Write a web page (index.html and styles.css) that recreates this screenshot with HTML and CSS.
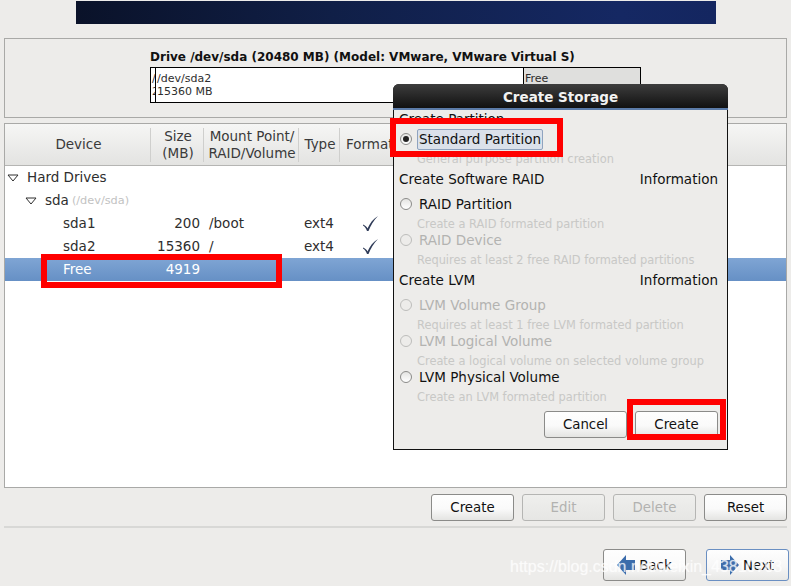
FILE: index.html
```html
<!DOCTYPE html>
<html lang="en">
	<head>
		<meta charset="utf-8" />
		<meta name="viewport" content="width=device-width, initial-scale=1" />
		<title>Create Storage</title>
		<link rel="stylesheet" href="styles.css">
	</head>
	<body>
		<div class="banner"></div>

		<section class="drive">
			<h2>Drive /dev/sda (20480 MB) (Model: VMware, VMware Virtual S)</h2>
			<div class="bar">
				<div class="seg seg-boot">/<br>200 MB</div>
				<div class="seg seg-root">/dev/sda2<br>15360 MB</div>
				<div class="seg seg-free">Free<br>4919 MB</div>
			</div>
		</section>

		<section class="tree">
			<div class="row head">
				<div class="cell">Device</div>
				<div class="cell">Size<br>(MB)</div>
				<div class="cell">Mount Point/<br>RAID/Volume</div>
				<div class="cell">Type</div>
				<div class="cell cell-format">Format</div>
			</div>
			<div class="row">
				<div class="name lvl0">
					<svg class="arrow" width="12" height="8" viewBox="0 0 12 8"><path d="M1 1H11L6 7Z" /></svg>
					Hard Drives
				</div>
			</div>
			<div class="row">
				<div class="name lvl1">
					<svg class="arrow" width="12" height="8" viewBox="0 0 12 8"><path d="M1 1H11L6 7Z" /></svg>
					sda <span class="path">(/dev/sda)</span>
				</div>
			</div>
			<div class="row">
				<div class="name lvl2">sda1</div>
				<div class="size">200</div>
				<div class="mount">/boot</div>
				<div class="type">ext4</div>
				<div class="fmt"><svg width="17" height="17" viewBox="0 0 17 17"><path d="M1 9.5C3 10 5 12 5.5 13.5C8 8 11 4 16 1C12 5 8.5 10.5 6.5 16H5C4 13.5 3 11.5 1 10.5Z" /></svg></div>
			</div>
			<div class="row">
				<div class="name lvl2">sda2</div>
				<div class="size">15360</div>
				<div class="mount">/</div>
				<div class="type">ext4</div>
				<div class="fmt"><svg width="17" height="17" viewBox="0 0 17 17"><path d="M1 9.5C3 10 5 12 5.5 13.5C8 8 11 4 16 1C12 5 8.5 10.5 6.5 16H5C4 13.5 3 11.5 1 10.5Z" /></svg></div>
			</div>
			<div class="row selected">
				<div class="name lvl2">Free</div>
				<div class="size">4919</div>
			</div>
		</section>

		<div class="actions">
			<button class="btn">Create</button>
			<button class="btn" disabled>Edit</button>
			<button class="btn" disabled>Delete</button>
			<button class="btn">Reset</button>
		</div>

		<div class="sep"></div>

		<div class="nav">
			<button class="btn btn-nav">
				<svg width="18" height="20" viewBox="0 0 18 20"><path class="nav-arrow" d="M0 10L9 0V5H18V15H9V20Z" /></svg>
				Back
			</button>
			<button class="btn btn-nav focus">
				<svg width="18" height="20" viewBox="0 0 18 20"><path class="nav-arrow" d="M18 10L9 0V5H0V15H9V20Z" /></svg>
				Next
			</button>
		</div>

		<div class="dialog">
			<div class="dialog-title">Create Storage</div>
			<div class="dialog-body">
				<div class="group">Create Partition</div>
				<div class="opt first"><span class="radio on"></span><span class="label active">Standard Partition</span></div>
				<div class="desc">General purpose partition creation</div>

				<div class="group gap"><span>Create Software RAID</span><span>Information</span></div>
				<div class="opt first-after"><span class="radio"></span><span class="label">RAID Partition</span></div>
				<div class="desc">Create a RAID formated partition</div>
				<div class="opt off"><span class="radio"></span><span class="label">RAID Device</span></div>
				<div class="desc">Requires at least 2 free RAID formated partitions</div>

				<div class="group gap"><span>Create LVM</span><span>Information</span></div>
				<div class="opt first-after off"><span class="radio"></span><span class="label">LVM Volume Group</span></div>
				<div class="desc">Requires at least 1 free LVM formated partition</div>
				<div class="opt off"><span class="radio"></span><span class="label">LVM Logical Volume</span></div>
				<div class="desc">Create a logical volume on selected volume group</div>
				<div class="opt"><span class="radio"></span><span class="label">LVM Physical Volume</span></div>
				<div class="desc">Create an LVM formated partition</div>

				<div class="dialog-actions">
					<button class="btn">Cancel</button>
					<button class="btn">Create</button>
				</div>
			</div>
		</div>

		<div class="mark mark-free"></div>
		<div class="mark mark-standard"></div>
		<div class="mark mark-create"></div>

		<div class="watermark">https://blog.csdn.net/weixin_43810703</div>
	</body>
</html>
```

FILE: styles.css
```css
* {
	box-sizing: border-box;
}

html, body {
	margin: 0;
	padding: 0;
}

body {
	position: relative;
	width: 791px;
	height: 586px;
	overflow: hidden;
	background: #edecea;
	color: #2e2e2e;
	font-family: "DejaVu Sans", sans-serif;
	font-size: 13.5px;
}

.banner {
	width: 640px;
	height: 23px;
	margin: 1px 0 0 76px;
	background: linear-gradient(90deg, #0a1229 0%, #101f47 40%, #152863 85%, #142660 100%);
}

.drive {
	height: 80px;
	margin: 14px 4px 0;
	padding: 11px 0 0 145px;
	border: 1px solid #a9a9a7;
}

.drive h2 {
	margin: 0;
	font-size: 12px;
	line-height: 15px;
	font-weight: bold;
	color: #111;
	white-space: nowrap;
}

.bar {
	display: flex;
	width: 491px;
	height: 36px;
	margin-top: 2px;
	border: 1px solid #000;
	background: #fff;
	font-size: 11px;
	line-height: 13px;
}

.seg {
	padding: 4px 0 0 1px;
	overflow: hidden;
	white-space: nowrap;
}

.seg-boot {
	width: 5px;
	border-right: 1px solid #000;
}

.seg-root {
	width: 368px;
	border-right: 1px solid #000;
}

.seg-free {
	flex: 1;
	background: #dfdfdd;
}

.tree {
	height: 365px;
	margin: 5px 4px 0;
	border: 1px solid #a9a9a7;
	background: #fff;
}

.row {
	display: grid;
	grid-template-columns: 146px 53px 95px 41px 1fr;
	height: 23px;
	line-height: 23px;
	white-space: nowrap;
}

.head {
	height: 42px;
	align-items: center;
	border-bottom: 1px solid #b5b5b3;
	background: linear-gradient(#f6f6f5, #e3e3e1);
	line-height: 17px;
	color: #3a3a3a;
}

.cell {
	height: 34px;
	padding-left: 2px;
	display: flex;
	align-items: center;
	justify-content: center;
	text-align: center;
	border-right: 1px solid #cfcfcd;
}

.cell-format {
	justify-content: flex-start;
	padding-left: 6px;
	border-right: 0;
}

.name {
	display: flex;
	align-items: center;
	gap: 8px;
}

.lvl0 {
	padding-left: 2px;
}

.lvl1 {
	padding-left: 20px;
}

.lvl2 {
	padding-left: 58px;
}

.arrow {
	flex: none;
}

.arrow path {
	fill: #fff;
	stroke: #2e2e2e;
	stroke-width: 1;
}

.path {
	margin-left: -5px;
	font-size: 11.3px;
	color: #c2c2c2;
}

.size {
	padding-right: 4px;
	text-align: right;
}

.mount, .type {
	padding-left: 5px;
}

.fmt {
	display: flex;
	align-items: center;
	padding-left: 22px;
}

.fmt path {
	fill: #2f3b58;
}

.selected {
	background: linear-gradient(#7fa5d4, #6690c5);
	color: #fff;
}

.btn {
	width: 83px;
	height: 27px;
	padding: 0;
	border: 1px solid #8b8b89;
	border-radius: 3px;
	background: linear-gradient(#fefefe, #fafafa 55%, #e4e4e2);
	font-family: inherit;
	font-size: 13.33px;
	color: #111;
}

.btn:disabled {
	border-color: #b5b5b3;
	background: linear-gradient(#efefed, #e6e6e4);
	color: #b2b2b0;
}

.actions {
	display: flex;
	justify-content: flex-end;
	gap: 8px;
	margin: 6px 4px 0 0;
}

.sep {
	height: 2px;
	margin: 5px 4px 0;
	background: #d8d8d6;
}

.nav {
	display: flex;
	justify-content: flex-end;
	gap: 20px;
	margin: 21px 2px 0 0;
}

.btn-nav {
	display: flex;
	align-items: center;
	justify-content: center;
	gap: 4px;
	height: 32px;
}

.focus {
	border-color: #6a8fc2;
	background: linear-gradient(#fefefe, #f6f6f6 55%, #e8e8e6);
}

.nav-arrow {
	fill: #3b6cab;
}

.dialog {
	position: absolute;
	left: 393px;
	top: 84px;
	width: 335px;
	height: 366px;
	border-radius: 6px 6px 0 0;
	background: #111;
	color: #111;
}

.dialog-title {
	height: 26px;
	padding-top: 3px;
	border-bottom: 2px solid #5b7ba8;
	border-radius: 6px 6px 0 0;
	background: linear-gradient(#3d3d3d, #111);
	font-weight: bold;
	font-size: 13.5px;
	line-height: 20px;
	text-align: center;
	color: #f2f2f2;
}

.dialog-body {
	height: 339px;
	margin: 0 1px;
	padding: 0 9px 0 5px;
	background: #edecea;
}

.group {
	display: flex;
	justify-content: space-between;
	height: 18px;
	line-height: 18px;
}

.gap {
	margin-top: 4px;
}

.opt {
	display: flex;
	align-items: flex-start;
	height: 19px;
	line-height: 18px;
}

.first {
	margin-top: 2px;
}

.first-after {
	margin-top: 7px;
}

.radio {
	flex: none;
	position: relative;
	width: 12px;
	height: 12px;
	margin: 3px 5px 0 1px;
	border: 1px solid #8b8b89;
	border-radius: 50%;
	background: linear-gradient(#e4e4e2, #fff);
}

.on::after {
	content: "";
	position: absolute;
	left: 2px;
	top: 2px;
	width: 6px;
	height: 6px;
	border-radius: 50%;
	background: #222;
}

.label {
	padding: 0 2px;
}

.active {
	height: 21px;
	margin-top: -1px;
	padding: 0 1px;
	border: 1px solid #8fa3bf;
	border-radius: 2px;
	background: #dbe1ea;
}

.off {
	color: #b3b3b1;
}

.off .radio {
	border-color: #bdbdbb;
	background: #edecea;
}

.desc {
	height: 17px;
	padding-left: 18px;
	line-height: 20px;
	font-size: 11.4px;
	color: #c8c8c6;
	white-space: nowrap;
}

.dialog-actions {
	display: flex;
	justify-content: flex-end;
	gap: 8px;
	margin-top: 7px;
}

.mark {
	position: absolute;
	border: 6px solid #f00;
}

.mark-free {
	left: 41px;
	top: 254px;
	width: 241px;
	height: 34px;
}

.mark-standard {
	left: 390px;
	top: 118px;
	width: 173px;
	height: 39px;
}

.mark-create {
	left: 627px;
	top: 399px;
	width: 99px;
	height: 41px;
}

.watermark {
	position: absolute;
	left: 510px;
	top: 557px;
	font-family: "Liberation Sans", sans-serif;
	font-size: 16px;
	line-height: 19px;
	color: rgba(255, 255, 255, 0.6);
	text-shadow: 0 0 1px rgba(255, 255, 255, 0.6);
	white-space: nowrap;
}
```
